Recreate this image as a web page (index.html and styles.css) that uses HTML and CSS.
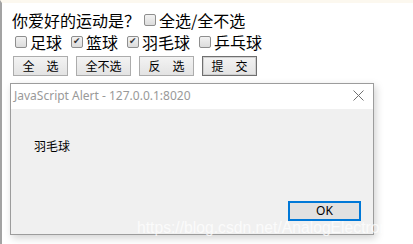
FILE: index.html
```html
<!DOCTYPE html>
<html lang="zh">
<head>
    <meta charset="UTF-8">
    <title>全选/全不选</title>
    <link rel="stylesheet" href="styles.css">
</head>
<body>
    <div class="page">
        <form id="sportForm">
            <div class="row">你爱好的运动是？<label class="opt first"><input type="checkbox" id="checkAll">全选/全不选</label></div>
            <div class="row">
                <label class="opt"><input type="checkbox" name="item" value="足球">足球</label>
                <label class="opt"><input type="checkbox" name="item" value="篮球" checked>篮球</label>
                <label class="opt"><input type="checkbox" name="item" value="羽毛球" checked>羽毛球</label>
                <label class="opt"><input type="checkbox" name="item" value="乒乓球">乒乓球</label>
            </div>
            <div class="buttons">
                <button type="button" class="btn">全　选</button>
                <button type="button" class="btn">全不选</button>
                <button type="button" class="btn">反　选</button>
                <button type="button" class="btn default">提　交</button>
            </div>
        </form>
    </div>

    <div class="alert">
        <div class="alert-title">
            <span>JavaScript Alert - 127.0.0.1:8020</span>
            <svg class="close" width="11" height="11" viewBox="0 0 11 11">
                <path d="M0.5 0.5 L10.5 10.5 M10.5 0.5 L0.5 10.5" stroke="#707070" stroke-width="1" fill="none"/>
            </svg>
        </div>
        <div class="alert-body">
            <p class="alert-msg">羽毛球</p>
            <div class="alert-actions">
                <button type="button" class="ok">OK</button>
            </div>
        </div>
    </div>

    <div class="watermark">https://blog.csdn.net/AnalogElectronic</div>
</body>
</html>
```

FILE: styles.css
```css
body {
    margin: 0;
    background: #fff;
    font-family: "Noto Sans CJK SC", sans-serif;
    font-size: 16px;
    color: #000;
}

.page {
    min-height: 244px;
    box-sizing: border-box;
    border-left: 2px solid #a3a3a3;
    border-top: 3px solid #fcf8ef;
    padding: 6px 0 0 10px;
}

.row {
    height: 22px;
    line-height: 22px;
    display: flex;
    align-items: center;
    white-space: nowrap;
}

.row + .row {
    padding-left: 3px;
}

.opt {
    display: inline-flex;
    align-items: center;
    margin-right: 9px;
}

.opt.first {
    margin-left: 4px;
}

input[type="checkbox"] {
    appearance: none;
    -webkit-appearance: none;
    width: 12px;
    height: 12px;
    margin: 0 3px 0 0;
    border: 1px solid #8e8e8e;
    border-radius: 2px;
    background: linear-gradient(#f2f2f2, #dcdcdc);
    box-sizing: border-box;
    position: relative;
}

input[type="checkbox"]:checked::after {
    content: "✔";
    position: absolute;
    left: 1px;
    top: -3px;
    font-family: "DejaVu Sans", sans-serif;
    font-size: 9px;
    line-height: 14px;
    color: #333;
}

.buttons {
    display: flex;
    gap: 8px;
    margin-top: 3px;
    padding-left: 1px;
}

.btn {
    width: 55px;
    height: 20px;
    padding: 0;
    font-family: "Noto Sans CJK SC", sans-serif;
    font-size: 12px;
    line-height: 18px;
    color: #000;
    background: linear-gradient(#f3f3f3, #e3e3e3);
    border: 1px solid #acacac;
    border-radius: 0;
}

.btn.default {
    border-color: #6f6f6f;
    box-shadow: inset 0 0 0 1px #d0d0d0;
}

.alert {
    position: absolute;
    left: 10px;
    top: 83px;
    width: 364px;
    height: 152px;
    box-sizing: border-box;
    border: 1px solid #9c9c9c;
    background: #f0f0f0;
    box-shadow: 2px 3px 8px rgba(0, 0, 0, 0.18);
    display: flex;
    flex-direction: column;
}

.alert-title {
    height: 25px;
    background: #fff;
    display: flex;
    align-items: center;
    justify-content: space-between;
    padding: 0 9px 0 3px;
    font-family: "Noto Sans", "Open Sans", sans-serif;
    font-size: 12px;
    color: #999;
}

.alert-title span {
    padding-bottom: 2px;
}

.close {
    margin-top: -2px;
}

.alert-body {
    flex: 1;
    display: flex;
    flex-direction: column;
    padding: 0 12px 13px 23px;
}

.alert-msg {
    margin: 29px 0 0;
    font-size: 12px;
    line-height: 16px;
    flex: 1;
}

.alert-actions {
    display: flex;
    justify-content: flex-end;
}

.ok {
    width: 73px;
    height: 20px;
    padding: 0;
    border: 2px solid #0078d7;
    background: #e1e1e1;
    font-family: "Noto Sans", sans-serif;
    font-size: 12px;
    line-height: 16px;
    color: #000;
}

.watermark {
    position: absolute;
    left: 137px;
    top: 222px;
    font-family: "Liberation Sans", Arial, sans-serif;
    font-size: 15.7px;
    line-height: 12px;
    color: rgba(255, 255, 255, 0.75);
    white-space: nowrap;
    pointer-events: none;
}
```
